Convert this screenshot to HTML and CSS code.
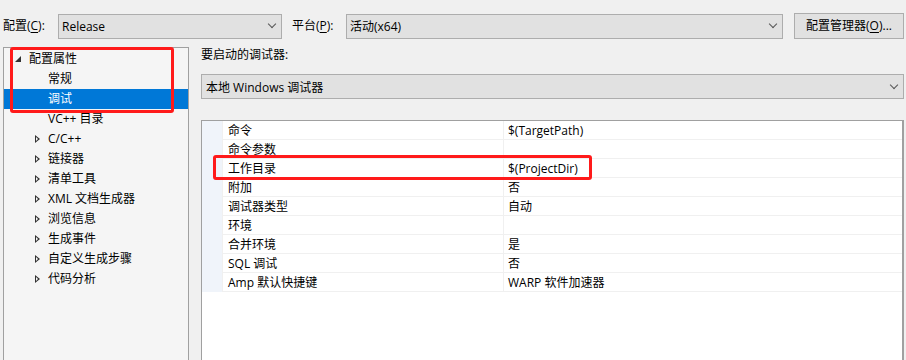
FILE: index.html
```html
<!DOCTYPE html>
<html lang="zh-CN">
<head>
    <meta charset="UTF-8">
    <title>调试属性</title>
    <link rel="stylesheet" href="styles.css">
</head>
<body>
<div id="page">
    <div class="toolbar">
        <span class="lbl lbl-cfg">配置(<u>C</u>):</span>
        <div class="combo combo-cfg"><span>Release</span><i class="chev"></i></div>
        <span class="lbl lbl-plat">平台(<u>P</u>):</span>
        <div class="combo combo-plat"><span>活动(x64)</span><i class="chev"></i></div>
        <div class="btn">配置管理器(<u>O</u>)...</div>
    </div>
    <div class="main">
        <div class="tree">
            <div class="node lvl0"><i class="tri-open"></i>配置属性</div>
            <div class="node lvl1">常规</div>
            <div class="node lvl1 selected">调试</div>
            <div class="node lvl1">VC++ 目录</div>
            <div class="node lvl1"><i class="tri"></i>C/C++</div>
            <div class="node lvl1"><i class="tri"></i>链接器</div>
            <div class="node lvl1"><i class="tri"></i>清单工具</div>
            <div class="node lvl1"><i class="tri"></i>XML 文档生成器</div>
            <div class="node lvl1"><i class="tri"></i>浏览信息</div>
            <div class="node lvl1"><i class="tri"></i>生成事件</div>
            <div class="node lvl1"><i class="tri"></i>自定义生成步骤</div>
            <div class="node lvl1"><i class="tri"></i>代码分析</div>
            <span class="mark mark-tree"></span>
        </div>
        <div class="pane">
            <div class="pane-title">要启动的调试器:</div>
            <div class="combo combo-dbg"><span>本地 Windows 调试器</span><i class="chev"></i></div>
            <div class="grid">
                <div class="row"><span class="name">命令</span><span class="val">$(TargetPath)</span></div>
                <div class="row"><span class="name">命令参数</span><span class="val"></span></div>
                <div class="row"><span class="name">工作目录</span><span class="val">$(ProjectDir)</span></div>
                <div class="row"><span class="name">附加</span><span class="val">否</span></div>
                <div class="row"><span class="name">调试器类型</span><span class="val">自动</span></div>
                <div class="row"><span class="name">环境</span><span class="val"></span></div>
                <div class="row"><span class="name">合并环境</span><span class="val">是</span></div>
                <div class="row"><span class="name">SQL 调试</span><span class="val">否</span></div>
                <div class="row"><span class="name">Amp 默认快捷键</span><span class="val">WARP 软件加速器</span></div>
                <span class="mark mark-grid"></span>
            </div>
        </div>
    </div>
</div>
</body>
</html>
```

FILE: styles.css
```css
*{
    padding: 0;
    margin: 0;
    box-sizing: border-box;
}
body{
    background: #f0f0f0;
    font-family: "Segoe UI", "Open Sans", "Noto Sans CJK SC", sans-serif;
    font-size: 12px;
    color: #000000;
}
#page{
    width: 906px;
    height: 360px;
    overflow: hidden;
}
u{
    text-decoration: underline;
    text-underline-offset: 2px;
}
.toolbar{
    display: flex;
    align-items: center;
    height: 26px;
    margin-top: 13px;
    padding-left: 3px;
}
.lbl{
    line-height: 26px;
}
.lbl-cfg{
    width: 55px;
}
.lbl-plat{
    width: 54px;
    margin-left: 10px;
}
.combo{
    display: flex;
    align-items: center;
    justify-content: space-between;
    height: 25px;
    background: #e1e1e1;
    border: 1px solid #adadad;
    padding: 0 6px 0 3px;
}
.combo-cfg{
    width: 224px;
}
.combo-plat{
    width: 437px;
}
.chev{
    width: 6px;
    height: 6px;
    border-right: 1px solid #555555;
    border-bottom: 1px solid #555555;
    transform: rotate(45deg);
    margin-top: -4px;
}
.btn{
    width: 110px;
    height: 26px;
    margin-left: 11px;
    background: #e1e1e1;
    border: 1px solid #adadad;
    text-align: center;
    line-height: 24px;
}
.main{
    display: flex;
    margin-top: 8px;
}
.tree{
    position: relative;
    width: 186px;
    height: 320px;
    margin-left: 3px;
    background: #f5f5f5;
    border: 1px solid #a0a0a0;
    padding-top: 1px;
}
.node{
    position: relative;
    height: 20px;
    line-height: 20px;
    white-space: nowrap;
}
.lvl0{
    padding-left: 25px;
}
.lvl1{
    padding-left: 44px;
}
.node.selected{
    background: #0078d7;
    color: #ffffff;
}
.tri-open{
    position: absolute;
    left: 11px;
    top: 7px;
    width: 0;
    height: 0;
    border-left: 6px solid transparent;
    border-bottom: 6px solid #333333;
}
.tri{
    position: absolute;
    left: 31px;
    top: 6px;
    width: 0;
    height: 0;
    border-top: 4px solid transparent;
    border-bottom: 4px solid transparent;
    border-left: 5px solid #333333;
}
.tri::after{
    content: "";
    position: absolute;
    left: -4px;
    top: -2px;
    border-top: 2px solid transparent;
    border-bottom: 2px solid transparent;
    border-left: 2px solid #f5f5f5;
}
.pane{
    width: 703px;
    margin-left: 12px;
}
.pane-title{
    height: 16px;
    line-height: 16px;
}
.combo-dbg{
    width: 703px;
    margin-top: 11px;
    padding-left: 4px;
}
.grid{
    position: relative;
    margin-top: 21px;
    height: 260px;
    background: #ffffff;
    border: 1px solid #a0a0a0;
    border-right-width: 2px;
}
.row{
    display: flex;
    height: 19px;
    line-height: 20px;
    background: linear-gradient(to right, #f0f4fa 20px, transparent 20px);
}
.name{
    width: 281px;
    margin-left: 20px;
    padding-left: 5px;
    border-bottom: 1px solid #f0f0f0;
    border-left: 1px solid #f0f0f0;
}
.val{
    flex: 1;
    padding-left: 4px;
    border-bottom: 1px solid #f0f0f0;
    border-left: 1px solid #f0f0f0;
}
.mark{
    position: absolute;
    border: 3px solid #ff1a1a;
    border-radius: 3px;
}
.mark-tree{
    left: 6px;
    top: -1px;
    width: 164px;
    height: 66px;
}
.mark-grid{
    left: 11px;
    top: 34px;
    width: 379px;
    height: 25px;
}
```
